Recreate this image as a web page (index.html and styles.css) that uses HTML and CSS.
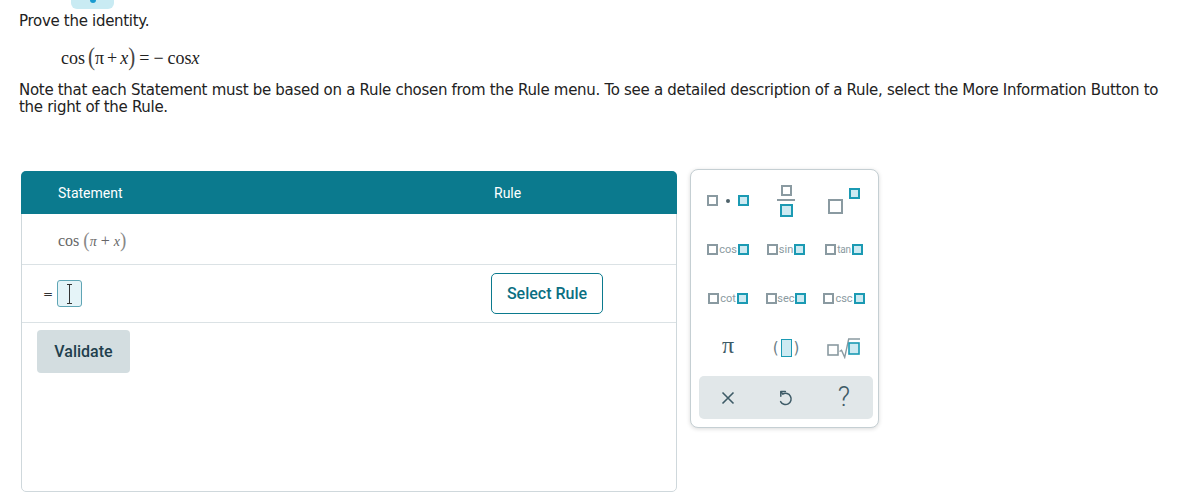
FILE: index.html
```html
<!DOCTYPE html>
<html lang="en">
<head>
<meta charset="utf-8">
<title>Prove the identity</title>
<link rel="stylesheet" href="styles.css">
</head>
<body>
<div class="page">
  <div class="tab"><span class="tab-dot"></span></div>
  <p class="prompt">Prove the identity.</p>
  <div class="eq"><span class="fn-name">cos</span><span class="bigparen">(</span><span>π</span><span class="bin">+</span><i>x</i><span class="bigparen">)</span><span class="rel">=</span><span class="neg">−</span><span>cos</span><i>x</i></div>
  <p class="note">Note that each Statement must be based on a Rule chosen from the Rule menu. To see a detailed description of a Rule, select the More Information Button to the right of the Rule.</p>

  <div class="work">
    <div class="proof">
      <div class="thead">
        <div class="th">Statement</div>
        <div class="th th-rule">Rule</div>
      </div>
      <div class="row row-given">
        <div class="cell cell-stmt"><span class="expr">cos <span class="p">(</span><i>π</i> + <i>x</i><span class="p">)</span></span></div>
        <div class="cell"></div>
      </div>
      <div class="row row-input">
        <div class="cell cell-stmt cell-eq">
          <span class="eqsign">=</span>
          <span class="answer">
            <svg width="9" height="22" viewBox="0 0 9 22"><path d="M2 1.5h5M4.5 1.5v19M2 20.5h5" stroke="#333" stroke-width="1" fill="none"/></svg>
          </span>
        </div>
        <div class="cell cell-rule"><button class="select-rule">Select Rule</button></div>
      </div>
      <div class="actions"><button class="validate">Validate</button></div>
    </div>

    <div class="keypad">
      <div class="keys">
        <div class="key"><span class="sq g"></span><span class="dot"></span><span class="sq t"></span></div>
        <div class="key"><span class="frac"><span class="sq g"></span><span class="bar"></span><span class="sq t big"></span></span></div>
        <div class="key"><span class="pow"><span class="sq g base"></span><span class="sq t exp"></span></span></div>

        <div class="key"><span class="sq g"></span><span class="fn">cos</span><span class="sq t"></span></div>
        <div class="key"><span class="sq g"></span><span class="fn">sin</span><span class="sq t"></span></div>
        <div class="key"><span class="sq g"></span><span class="fn fn-tan">tan</span><span class="sq t"></span></div>

        <div class="key"><span class="sq g"></span><span class="fn">cot</span><span class="sq t"></span></div>
        <div class="key"><span class="sq g"></span><span class="fn fn-tight">sec</span><span class="sq t"></span></div>
        <div class="key"><span class="sq g"></span><span class="fn">csc</span><span class="sq t"></span></div>

        <div class="key"><span class="pi">π</span></div>
        <div class="key"><span class="par">(</span><span class="sq t tall"></span><span class="par">)</span></div>
        <div class="key">
          <svg width="34" height="22" viewBox="0 0 34 22">
            <rect x="1" y="8" width="10" height="10" fill="#fff" stroke="#8a9aa1" stroke-width="1.6"/>
            <path d="M12.5 14.5l2-1.2 3.2 7 4-18.3h11.3" fill="none" stroke="#8a9aa1" stroke-width="1.4"/>
            <rect x="22" y="6" width="10" height="11" fill="#cdeaf2" stroke="#1b9ab3" stroke-width="1.6"/>
          </svg>
        </div>
      </div>
      <div class="toolbar">
        <div class="tool">
          <svg width="14" height="14" viewBox="0 0 14 14"><path d="M1.5 1.5l11 11M12.5 1.5l-11 11" stroke="#3e5b67" stroke-width="1.6" fill="none"/></svg>
        </div>
        <div class="tool">
          <svg width="16" height="18" viewBox="0 0 16 18"><path d="M2.8 7.2V2.6H7.4" stroke="#3e5b67" stroke-width="1.5" fill="none" stroke-linecap="round" stroke-linejoin="round"/><path d="M3.2 3.2l1.6 1.9A5.6 5.6 0 1 1 2.6 12.6" stroke="#3e5b67" stroke-width="1.5" fill="none" stroke-linecap="round"/></svg>
        </div>
        <div class="tool"><span class="qmark">?</span></div>
      </div>
    </div>
  </div>
</div>
</body>
</html>
```

FILE: styles.css
```css
* { box-sizing: border-box; }

html, body {
  margin: 0;
  padding: 0;
  background: #fff;
}

.page {
  padding: 0 19px;
  font-family: "DejaVu Sans", Verdana, sans-serif;
  color: #222;
}

.tab {
  width: 43px;
  height: 9px;
  margin-left: 52px;
  background: #c9ebf3;
  border-radius: 0 0 6px 6px;
  display: flex;
  justify-content: center;
}

.tab-dot {
  width: 6px;
  height: 3px;
  background: #1a9bd0;
  border-radius: 0 0 3px 3px;
}

.prompt {
  margin: 3px 0 0;
  font-size: 15px;
  line-height: 18px;
  letter-spacing: -0.3px;
}

.eq {
  margin: 17px 0 0 42px;
  height: 20px;
  font-family: "Liberation Serif", "Times New Roman", serif;
  font-size: 18px;
  line-height: 20px;
  color: #222;
  display: flex;
  align-items: baseline;
}

.eq .fn-name { margin-right: 3px; }
.eq .neg { margin-right: 4px; }
.eq .bin { margin: 0 3px; }
.eq .rel { margin: 0 4px; }

.eq .bigparen {
  display: inline-block;
  font-size: 21px;
  line-height: 20px;
  transform: scaleY(1.15);
  color: #444;
}

.note {
  margin: 15px 0 0;
  font-size: 15px;
  line-height: 17px;
  letter-spacing: -0.3px;
}

.work {
  margin-top: 55px;
  display: flex;
  align-items: flex-start;
  gap: 13px;
  padding-left: 2px;
}

.proof {
  width: 656px;
  height: 321px;
  border: 1px solid #cfd8dc;
  border-radius: 5px;
  display: flex;
  flex-direction: column;
  font-family: Roboto, "Liberation Sans", sans-serif;
}

.thead {
  display: grid;
  grid-template-columns: 470px 1fr;
  height: 43px;
  margin: -1px -1px 0;
  background: #0b7a8e;
  border-radius: 5px 5px 0 0;
  color: #fff;
  font-size: 14px;
  align-items: center;
}

.th:first-child { padding-left: 37px; }
.th-rule { padding-left: 3px; }

.row {
  display: grid;
  grid-template-columns: 470px 1fr;
  border-bottom: 1px solid #dbe2e5;
  align-items: center;
}

.row-given { height: 51px; }
.row-input { height: 58px; }

.cell-stmt { padding-left: 36px; }

.expr {
  font-family: "Liberation Serif", "Times New Roman", serif;
  font-size: 16px;
  color: #666;
  position: relative;
  top: 1px;
}

.expr i { font-size: 14px; }

.expr .p {
  display: inline-block;
  font-size: 19px;
  transform: scaleY(1.15);
  color: #888;
}

.cell-eq {
  display: flex;
  align-items: center;
  padding-left: 21px;
  gap: 6px;
}

.eqsign {
  font-family: "DejaVu Sans", sans-serif;
  font-size: 12px;
  color: #333;
  width: 8px;
}

.answer {
  width: 25px;
  height: 27px;
  border: 1px solid #5fa5b5;
  border-radius: 3px;
  background: #e5f4f8;
  display: flex;
  justify-content: center;
  align-items: center;
}

.answer svg { display: block; }

.select-rule {
  width: 112px;
  height: 41px;
  border: 1px solid #0b7a8e;
  border-radius: 5px;
  background: #fff;
  color: #0b6f82;
  font-family: Roboto, "Liberation Sans", sans-serif;
  font-size: 16px;
  font-weight: 500;
  padding: 0;
  margin-left: -1px;
}

.actions {
  padding: 7px 0 0 15px;
}

.validate {
  width: 93px;
  height: 43px;
  border: none;
  border-radius: 4px;
  background: #d3dde0;
  color: #1f3f4d;
  font-family: Roboto, "Liberation Sans", sans-serif;
  font-size: 16px;
  font-weight: 500;
  padding: 0;
}

/* keypad */
.keypad {
  width: 189px;
  height: 259px;
  margin-top: -2px;
  border: 1px solid #c5cfd3;
  border-radius: 8px;
  background: #fff;
  box-shadow: 0 1px 4px rgba(0, 0, 0, 0.15);
  padding: 6px 5px 8px 8px;
  display: flex;
  flex-direction: column;
}

.keys {
  display: grid;
  grid-template-columns: repeat(3, 58px);
  grid-auto-rows: 49px;
}

.key {
  display: flex;
  align-items: center;
  justify-content: center;
  color: #7f8f96;
}

.sq {
  display: inline-block;
  width: 11px;
  height: 11px;
  border: 2px solid;
}

.sq.g { border-color: #8a9aa1; background: #fff; }
.sq.t { border-color: #1b9ab3; background: #cdeaf2; }

.dot {
  width: 4px;
  height: 4px;
  border-radius: 50%;
  background: #4e626b;
  margin: 0 8px;
}

.frac {
  display: flex;
  flex-direction: column;
  align-items: center;
  gap: 3px;
}

.frac .bar {
  width: 18px;
  height: 2px;
  background: #8a9aa1;
}

.frac .sq.big { width: 13px; height: 13px; }

.pow {
  position: relative;
  width: 32px;
  height: 26px;
}

.pow .base {
  position: absolute;
  left: 0;
  bottom: 0;
  width: 15px;
  height: 15px;
}

.pow .exp {
  position: absolute;
  right: 0;
  top: 0;
  width: 11px;
  height: 11px;
}

.fn {
  font-family: Roboto, "Liberation Sans", sans-serif;
  font-size: 11px;
  color: #8a9aa1;
  margin: 0 1px;
  line-height: 11px;
}

.fn-tan { font-size: 10px; letter-spacing: -0.3px; }
.fn-tight { margin: 0; }

.pi {
  font-family: "Liberation Serif", "Times New Roman", serif;
  font-size: 24px;
  color: #3e5b67;
  margin-top: -4px;
}

.par {
  font-family: "DejaVu Sans", sans-serif;
  font-size: 15px;
  color: #6c7e86;
  margin: 0 2px;
}

.sq.tall {
  width: 11px;
  height: 18px;
  border-width: 1.5px;
}

.toolbar {
  margin-top: 4px;
  height: 45px;
  width: 174px;
  background: #e1e7e9;
  border-radius: 5px;
  display: grid;
  grid-template-columns: repeat(3, 1fr);
}

.tool {
  display: flex;
  align-items: center;
  justify-content: center;
}

.qmark {
  font-family: Roboto, "Liberation Sans", sans-serif;
  font-size: 27px;
  font-weight: 300;
  color: #3e5b67;
  margin-top: -1px;
}
```
